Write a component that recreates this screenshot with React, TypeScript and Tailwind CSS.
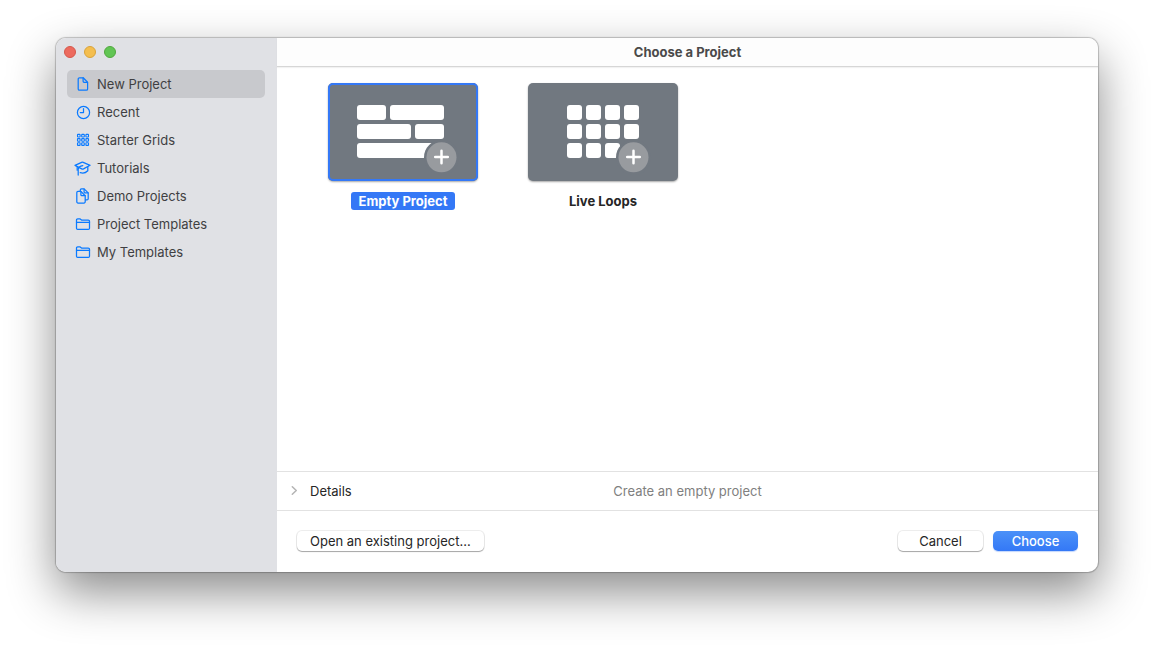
import { useState } from "react";
import type { ReactNode } from "react";
import { clsx } from "clsx";

const iconProps = {
  viewBox: "0 0 16 16",
  fill: "none",
  stroke: "currentColor",
  strokeWidth: 1.25,
  strokeLinejoin: "round" as const,
  strokeLinecap: "round" as const,
  className: "size-4 shrink-0 text-[#0a7aff]",
  "aria-hidden": true,
};

const DocIcon = () => (
  <svg {...iconProps}>
    <path d="M4.5 1.8h3.7l4.4 4.4v6.7a1.3 1.3 0 0 1-1.3 1.3H4.5a1.3 1.3 0 0 1-1.3-1.3V3.1a1.3 1.3 0 0 1 1.3-1.3z" />
    <path d="M8.1 1.9v3.4a1 1 0 0 0 1 1h3.4" />
  </svg>
);

const ClockIcon = () => (
  <svg {...iconProps}>
    <circle cx="8.5" cy="8.5" r="6.1" />
    <path d="M8.5 4.6v3.9H5.3" />
  </svg>
);

const GridIcon = () => (
  <svg {...iconProps} strokeWidth={1.1}>
    {[2.4, 6.6, 10.8].map((y) =>
      [2.5, 6.7, 10.9].map((x) => (
        <rect key={`${x}-${y}`} x={x} y={y} width="2.6" height="2.6" rx="0.5" />
      ))
    )}
  </svg>
);

const CapIcon = () => (
  <svg {...iconProps} className="size-4 shrink-0 overflow-visible text-[#0a7aff]">
    <path d="M0 5.4 6.6 2.4a2 2 0 0 1 1.6 0l6.9 2.9-6.6 3.6a2 2 0 0 1-1.8 0z" />
    <path d="M7.8 5.7c-2.2.4-4.5 1.4-4.6 3.6v5.8" />
    <path d="M2.2 6.8v3.4" />
    <path d="M12.8 6.9v3.9c-2.1 2.2-4.9 2.8-7.6 1.9" />
  </svg>
);

const DocsIcon = () => (
  <svg {...iconProps}>
    <path d="M5.3 3.2V2.1a1.2 1.2 0 0 1 1.2-1.2h2.6l4.1 4v5.8a1.2 1.2 0 0 1-1.2 1.2h-1.4" />
    <path d="M9.1 1v3a.9.9 0 0 0 .9.9h3.1" />
    <path d="M3 3.4h2.9l4.3 4.3v6.1a1.2 1.2 0 0 1-1.2 1.2H3a1.2 1.2 0 0 1-1.2-1.2V4.6A1.2 1.2 0 0 1 3 3.4z" />
    <path d="M5.9 3.5v3.3a.9.9 0 0 0 .9.9h3.3" />
  </svg>
);

const FolderIcon = () => (
  <svg {...iconProps}>
    <path d="M1.5 12.2V4.1a1.2 1.2 0 0 1 1.2-1.2h2.5l1.3 1.1h6.8a1.2 1.2 0 0 1 1.2 1.2v7a1.2 1.2 0 0 1-1.2 1.2H2.7a1.2 1.2 0 0 1-1.2-1.2z" />
    <path d="M1.5 6.4h13" />
  </svg>
);

const categories: { name: string; icon: ReactNode }[] = [
  { name: "New Project", icon: <DocIcon /> },
  { name: "Recent", icon: <ClockIcon /> },
  { name: "Starter Grids", icon: <GridIcon /> },
  { name: "Tutorials", icon: <CapIcon /> },
  { name: "Demo Projects", icon: <DocsIcon /> },
  { name: "Project Templates", icon: <FolderIcon /> },
  { name: "My Templates", icon: <FolderIcon /> },
];

// round "add" badge with a gap cut out of the tiles behind it
const PlusBadge = ({ cx }: { cx: number }) => (
  <g>
    <circle cx={cx} cy="74.3" r="17.5" fill="#717880" />
    <circle cx={cx} cy="74.3" r="15" fill="#989b9f" />
    <path
      d={`M${cx - 6.3} 74h12.6M${cx} 67.7v12.6`}
      stroke="#fff"
      strokeWidth="2.5"
      strokeLinecap="round"
    />
  </g>
);

const TracksArt = () => (
  <svg viewBox="0 0 150 98" className="block w-full" aria-hidden="true">
    <g fill="#fff">
      <rect x="29" y="22" width="29" height="15" rx="3" />
      <rect x="62" y="22" width="54" height="15" rx="3" />
      <rect x="29" y="41" width="54" height="15" rx="3" />
      <rect x="87" y="41" width="29" height="15" rx="3" />
      <rect x="29" y="60" width="80" height="15" rx="3" />
    </g>
    <PlusBadge cx={113.5} />
  </svg>
);

const LoopsArt = () => (
  <svg viewBox="0 0 150 98" className="block w-full" aria-hidden="true">
    <g fill="#fff">
      {[22, 41, 60].map((y) =>
        [39, 58, 77, 96].map((x) =>
          x === 96 && y === 60 ? null : (
            <rect key={`${x}-${y}`} x={x} y={y} width="15" height="15" rx="3" />
          )
        )
      )}
    </g>
    <PlusBadge cx={105.5} />
  </svg>
);

const projects = [
  { name: "Empty Project", details: "Create an empty project", art: <TracksArt /> },
  { name: "Live Loops", details: "Create a Live Loops project", art: <LoopsArt /> },
];

export default function App() {
  const [category, setCategory] = useState("New Project");
  const [project, setProject] = useState(projects[0]);

  return (
    <div className="flex min-h-screen flex-col bg-white px-14 pt-[38px] pb-[74px] font-['Inter','Liberation_Sans',sans-serif] text-[13px] leading-4">
      <div className="flex flex-1 overflow-hidden rounded-[10px] bg-white shadow-[0_0_1px_1px_rgba(0,0,0,0.22),0_20px_48px_rgba(0,0,0,0.46)]">
        <aside className="flex w-[221px] shrink-0 flex-col bg-[#e0e1e5]">
          <div className="flex gap-2 px-2 pt-2 pb-3">
            <button aria-label="Close" className="size-3 rounded-full border border-[#d5574b] bg-[#ec6a5e]" />
            <button aria-label="Minimize" className="size-3 rounded-full border border-[#d9a33a] bg-[#f4be4f]" />
            <button aria-label="Zoom" className="size-3 rounded-full border border-[#51a73e] bg-[#61c554]" />
          </div>
          <nav className="flex flex-col pr-3 pl-[11px]">
            {categories.map(({ name, icon }) => (
              <button
                key={name}
                onClick={() => setCategory(name)}
                className={clsx(
                  "flex h-7 items-center gap-1.5 rounded-[5px] px-2 text-left text-[#3f3f42]",
                  category === name && "bg-[#c8c9cd]"
                )}
              >
                {icon}
                {name}
              </button>
            ))}
          </nav>
        </aside>

        <main className="flex min-w-0 flex-1 flex-col">
          <header className="flex h-[29px] shrink-0 items-center justify-center border-b border-[#d6d6d6] bg-[#fdfdfd] shadow-[0_1px_1px_rgba(0,0,0,0.05)]">
            <h1 className="font-bold text-[#4a4a4a]">Choose a Project</h1>
          </header>

          <div className="flex flex-1 flex-wrap content-start gap-[50px] px-[51px] pt-4">
            {projects.map((p) => {
              const selected = p.name === project.name;
              return (
                <button
                  key={p.name}
                  onClick={() => setProject(p)}
                  className="flex w-[150px] flex-col items-center gap-[11px]"
                >
                  <span
                    className={clsx(
                      "block w-full overflow-hidden rounded-[5px] bg-[#717880] shadow-[0_1px_2px_rgba(0,0,0,0.35)]",
                      selected && "outline-2 -outline-offset-2 outline-[#3478f6]"
                    )}
                  >
                    {p.art}
                  </span>
                  <span
                    className={clsx(
                      "rounded-[3px] px-2 leading-[18px] font-bold",
                      selected ? "bg-[#3478f6] text-white" : "text-[#262626]"
                    )}
                  >
                    {p.name}
                  </span>
                </button>
              );
            })}
          </div>

          <section className="grid h-10 shrink-0 grid-cols-[1fr_auto_1fr] items-center border-y border-[#e2e2e2] px-3 pb-px">
            <button className="flex items-center gap-2.5 justify-self-start text-[#262626]">
              <svg viewBox="0 0 10 10" className="size-[11px]" fill="none" stroke="#b4b4b4" strokeWidth="1.4" strokeLinecap="round" strokeLinejoin="round" aria-hidden="true">
                <path d="M3 1.6 6.6 5 3 8.4" />
              </svg>
              Details
            </button>
            <p className="text-[#808080]">{project.details}</p>
          </section>

          <footer className="flex h-[61px] shrink-0 items-center gap-2.5 px-5 pb-0.5">
            <button className="mr-auto h-5 rounded-[5px] bg-white px-[13px] text-[#262626] shadow-[0_0_0_1px_rgba(0,0,0,0.07),0_1px_1px_rgba(0,0,0,0.3)]">
              Open an existing project...
            </button>
            <button className="h-5 w-[85px] rounded-[5px] bg-white text-[#262626] shadow-[0_0_0_1px_rgba(0,0,0,0.07),0_1px_1px_rgba(0,0,0,0.3)]">
              Cancel
            </button>
            <button className="h-5 w-[85px] rounded-[5px] bg-linear-to-b from-[#4b91f8] to-[#3478f6] font-medium text-white shadow-[0_1px_1px_rgba(52,120,246,0.3)]">
              Choose
            </button>
          </footer>
        </main>
      </div>
    </div>
  );
}
